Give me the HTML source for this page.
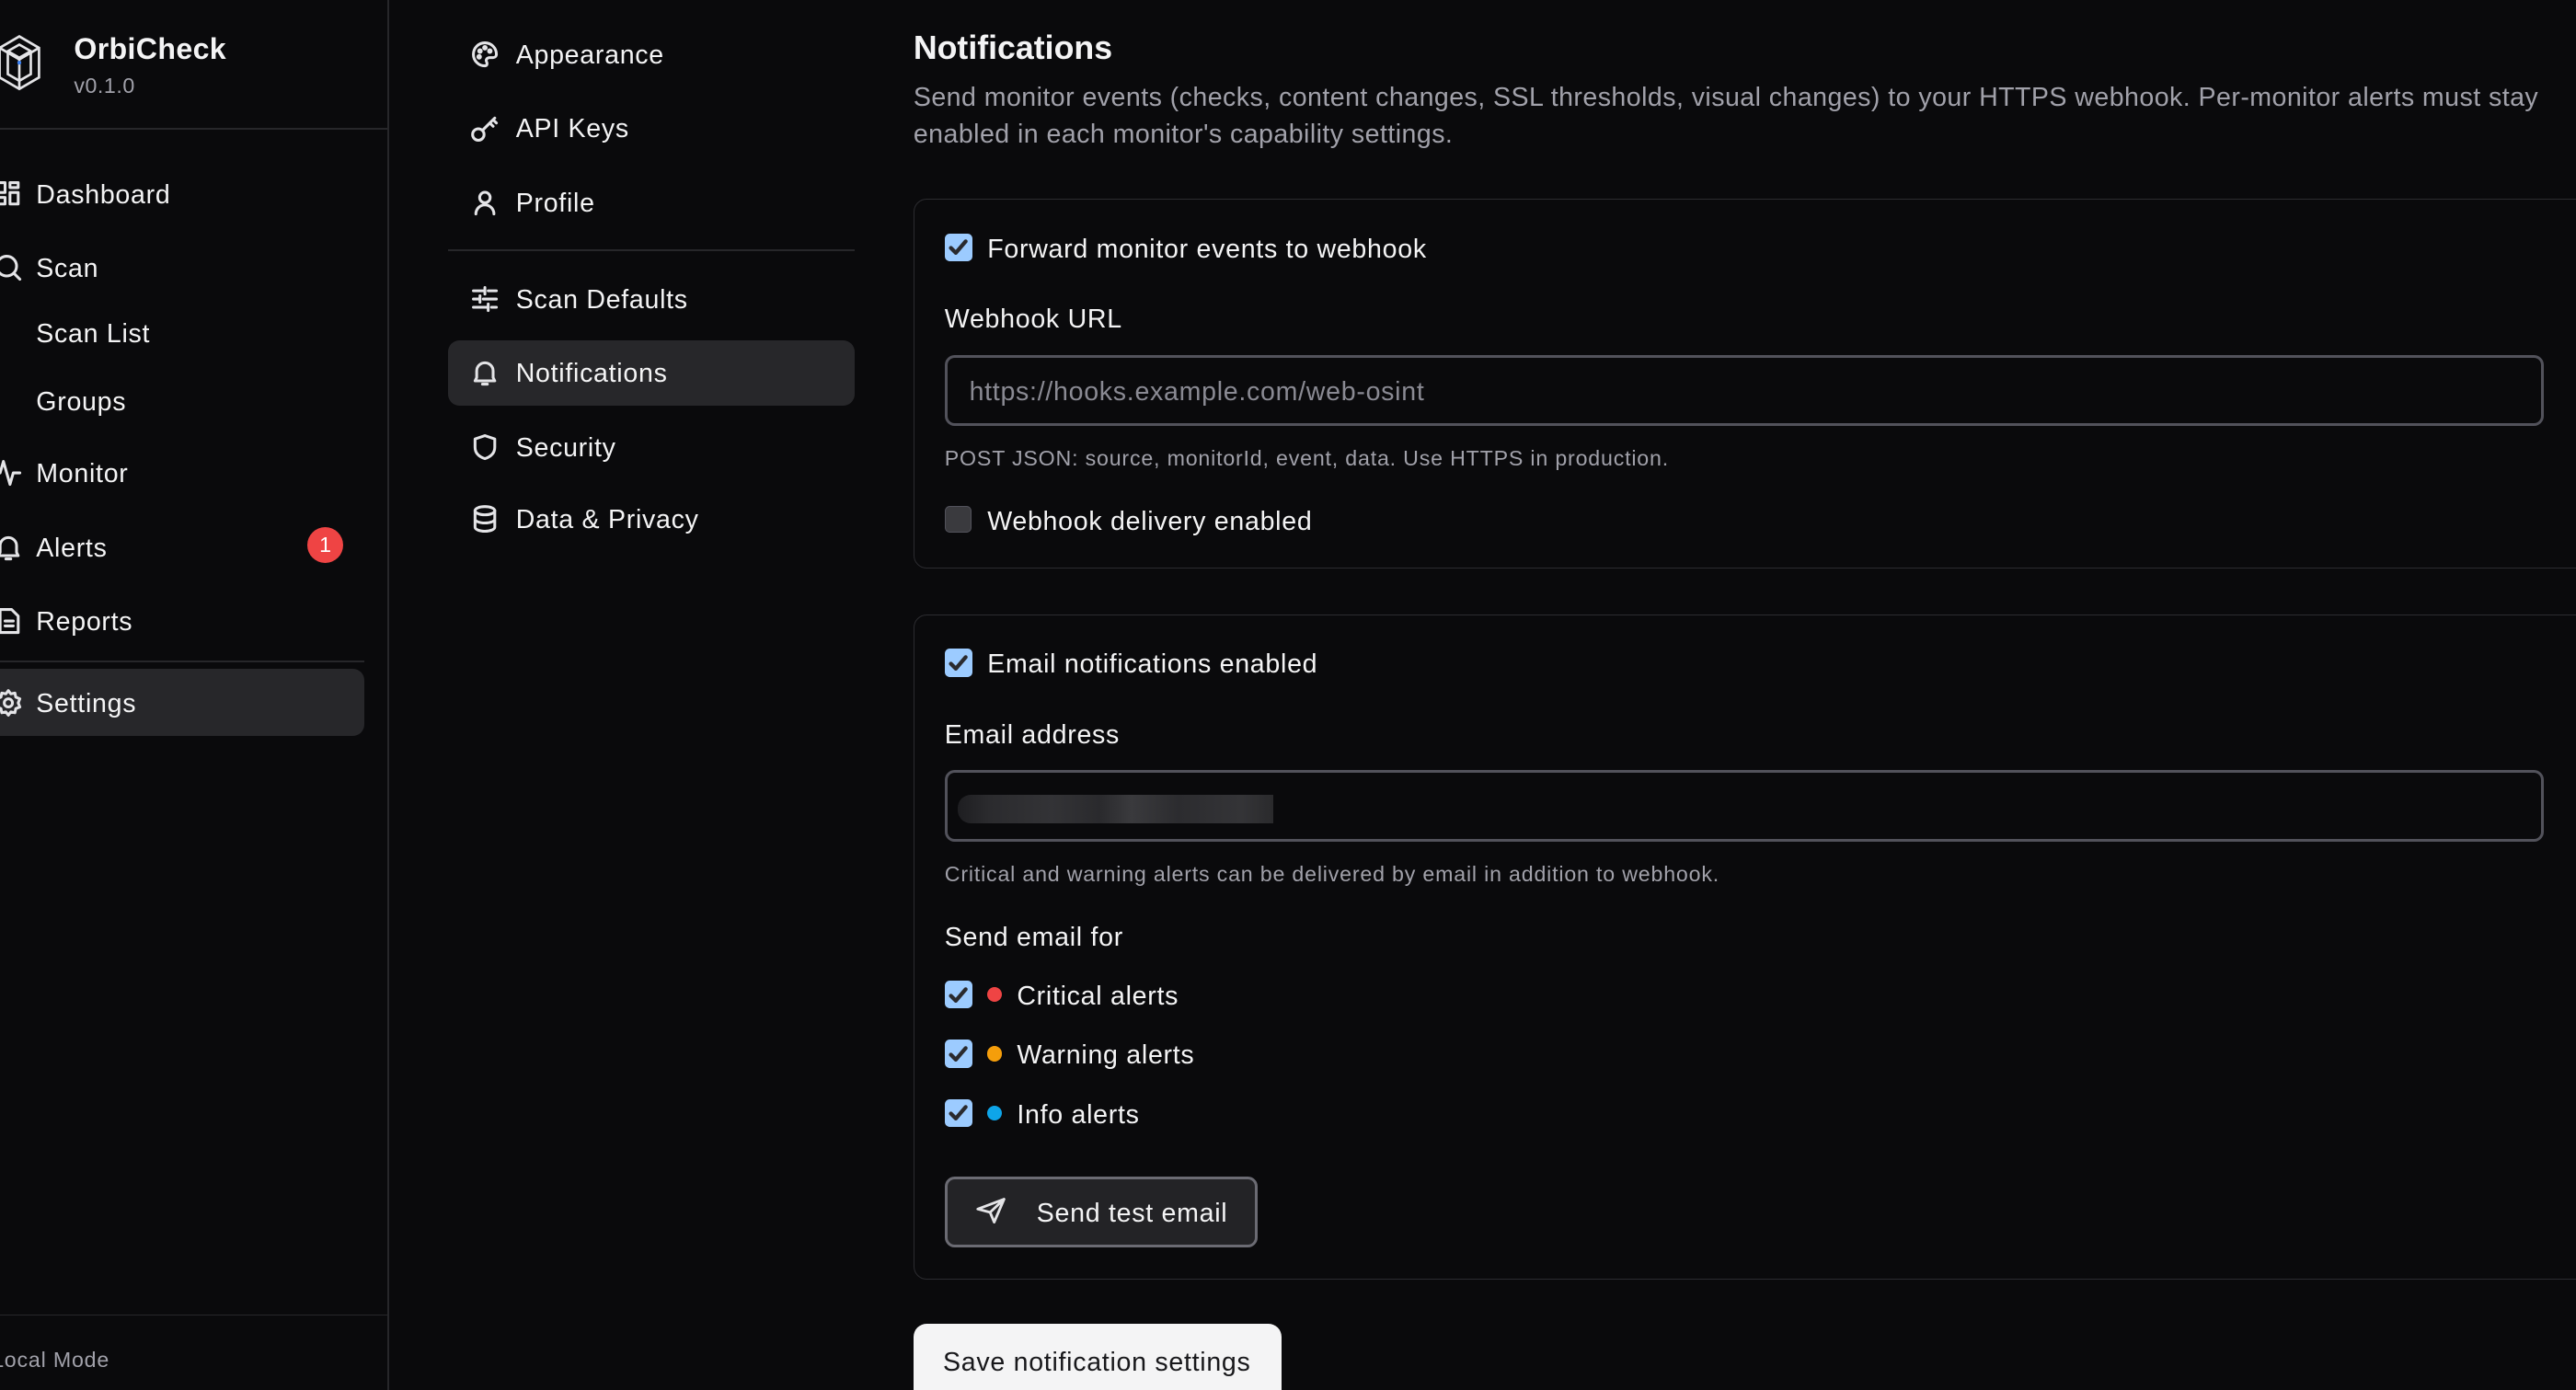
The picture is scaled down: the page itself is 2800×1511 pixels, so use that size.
<!DOCTYPE html>
<html><head><meta charset="utf-8">
<style>
html,body{margin:0;padding:0;background:#0a0a0c;overflow:hidden}
#w{position:relative;width:1568px;height:846px;zoom:1.785714;background:#0a0a0c;color:#f4f4f5;font-family:"Liberation Sans",sans-serif;overflow:hidden}
.a{position:absolute;white-space:nowrap}
.t16{font-size:16px;line-height:20px;letter-spacing:0.4px;margin-top:1px}
.sm{font-size:13px;line-height:16px;letter-spacing:0.45px}
.g{color:#a1a1aa}
svg.i{position:absolute;width:18px;height:18px;fill:none;stroke:#e4e4e7;stroke-width:1.7;stroke-linecap:round;stroke-linejoin:round}
.cb{position:absolute;width:17px;height:17px;border-radius:3px;background:#9ccbff}
.cb svg{position:absolute;left:2px;top:2px;width:13px;height:13px;fill:none;stroke:#2a2a2e;stroke-width:2.4;stroke-linecap:round;stroke-linejoin:round}
.card{position:absolute;left:556px;width:1030px;border:1px solid #2c2c30;border-radius:8px}
.inp{position:absolute;left:575px;width:970px;height:40px;border:2px solid #52525b;border-radius:6px}
.dot{position:absolute;width:9px;height:9px;border-radius:50%}
</style></head><body><div id="w">
<div class="a" style="left:236px;top:0;width:1px;height:846px;background:#27272a"></div>
<div class="a" style="left:0;top:78px;width:236px;height:1px;background:#27272a"></div>
<svg class="a" style="left:-2px;top:20px;width:28px;height:36px" viewBox="0 0 28 36" fill="none" stroke="#e4e4e7" stroke-width="1.5"><path d="M14 2 L26 9 L26 27 L14 34 L2 27 L2 9 Z"/><path d="M14 7 L21 11 L21 25 L14 29 L7 25 L7 11 Z"/><path d="M2 9 L14 16 L26 9 M14 16 V34 M7 11 L14 15 L21 11"/><circle cx="14" cy="18" r="1.2" fill="#3b82f6" stroke="none"/></svg>
<div class="a" style="left:45px;top:18px;font-size:18px;font-weight:bold;line-height:24px;letter-spacing:0.2px">OrbiCheck</div>
<div class="a g" style="left:45px;top:44px;font-size:13px;line-height:16px;letter-spacing:0.3px">v0.1.0</div>

<svg class="i" style="left:-4px;top:109px" viewBox="0 0 18 18"><rect x="2" y="2" width="5" height="6"/><rect x="10" y="2" width="5" height="3"/><rect x="10" y="8" width="5" height="7"/><rect x="2" y="11" width="5" height="4"/></svg>
<div class="a t16" style="left:22px;top:108px">Dashboard</div>
<svg class="i" style="left:-4px;top:154px" viewBox="0 0 18 18"><circle cx="8" cy="8" r="6"/><path d="M12.5 12.5 L16 16"/></svg>
<div class="a t16" style="left:22px;top:153px">Scan</div>
<div class="a t16" style="left:22px;top:193px">Scan List</div>
<div class="a t16" style="left:22px;top:234px">Groups</div>
<svg class="i" style="left:-4px;top:279px" viewBox="0 0 18 18"><path d="M1 9 H4 L6 2 L10 16 L12 9 H16"/></svg>
<div class="a t16" style="left:22px;top:278px">Monitor</div>
<svg class="i" style="left:-4px;top:324px" viewBox="0 0 18 18"><path d="M4 12 V8 a5 5 0 0 1 10 0 V12 L15 14 H3 Z M7.5 16 h3"/></svg>
<div class="a t16" style="left:22px;top:323px">Alerts</div>
<div class="a" style="left:187px;top:321px;width:22px;height:22px;border-radius:50%;background:#ef4444;color:#fff;font-size:13px;line-height:22px;text-align:center">1</div>
<svg class="i" style="left:-4px;top:369px" viewBox="0 0 18 18"><path d="M4 2 H11 L15 6 V16 H4 Z M7 9 H12 M7 12 H12"/></svg>
<div class="a t16" style="left:22px;top:368px">Reports</div>
<div class="a" style="left:0;top:402px;width:222px;height:1px;background:#27272a"></div>
<div class="a" style="left:-10px;top:407px;width:232px;height:41px;border-radius:7px;background:#27272a"></div>
<svg class="i" style="left:-4px;top:419px" viewBox="0 0 18 18"><circle cx="9" cy="9" r="2.5"/><path d="M9 1.5 L10.5 3.5 L13 3 L13.5 5.5 L16 6.5 L15 9 L16 11.5 L13.5 12.5 L13 15 L10.5 14.5 L9 16.5 L7.5 14.5 L5 15 L4.5 12.5 L2 11.5 L3 9 L2 6.5 L4.5 5.5 L5 3 L7.5 3.5 Z"/></svg>
<div class="a t16" style="left:22px;top:418px">Settings</div>
<div class="a" style="left:0;top:800px;width:236px;height:1px;background:#27272a"></div>
<div class="a g sm" style="left:-5px;top:820px">Local Mode</div>

<svg class="i" style="left:286px;top:24px" viewBox="0 0 18 18"><path d="M9 2 a7 7 0 1 0 0 14 c1.5 0 1.5-1.5 1-2.5 s0-2.5 2-2.5 h2 a2 2 0 0 0 2-2 A7 7 0 0 0 9 2 Z"/><circle cx="6" cy="7" r=".8"/><circle cx="9" cy="5" r=".8"/><circle cx="12" cy="7" r=".8"/><circle cx="5.5" cy="10.5" r=".8"/></svg>
<div class="a t16" style="left:314px;top:23px">Appearance</div>
<svg class="i" style="left:286px;top:69px" viewBox="0 0 18 18"><circle cx="5" cy="13" r="3.5"/><path d="M7.5 10.5 L15 3 M12 6 L14 8 M14 4 L16 6"/></svg>
<div class="a t16" style="left:314px;top:68px">API Keys</div>
<svg class="i" style="left:286px;top:114px" viewBox="0 0 18 18"><circle cx="9" cy="6" r="3.2"/><path d="M3.5 16 a5.5 5.5 0 0 1 11 0"/></svg>
<div class="a t16" style="left:314px;top:113px">Profile</div>
<div class="a" style="left:273px;top:152px;width:247px;height:1px;background:#27272a"></div>
<svg class="i" style="left:286px;top:173px" viewBox="0 0 18 18"><path d="M2 4 H8 M11 4 H16 M2 9 H5 M8 9 H16 M2 14 H10 M13 14 H16 M9 2 V6 M6 7 V11 M11 12 V16"/></svg>
<div class="a t16" style="left:314px;top:172px">Scan Defaults</div>
<div class="a" style="left:273px;top:207px;width:247px;height:40px;border-radius:7px;background:#27272a"></div>
<svg class="i" style="left:286px;top:218px" viewBox="0 0 18 18"><path d="M4 12 V8 a5 5 0 0 1 10 0 V12 L15 14 H3 Z M7.5 16 h3"/></svg>
<div class="a t16" style="left:314px;top:217px">Notifications</div>
<svg class="i" style="left:286px;top:263px" viewBox="0 0 18 18"><path d="M9 2 L15 4 V9 c0 4-3 6-6 7 c-3-1-6-3-6-7 V4 Z"/></svg>
<div class="a t16" style="left:314px;top:262px">Security</div>
<svg class="i" style="left:286px;top:307px" viewBox="0 0 18 18"><ellipse cx="9" cy="4" rx="6" ry="2.5"/><path d="M3 4 V14 c0 1.4 2.7 2.5 6 2.5 s6-1.1 6-2.5 V4 M3 9 c0 1.4 2.7 2.5 6 2.5 s6-1.1 6-2.5"/></svg>
<div class="a t16" style="left:314px;top:306px">Data &amp; Privacy</div>

<div class="a" style="left:556px;top:16px;font-size:20px;font-weight:bold;line-height:26px">Notifications</div>
<div class="a g" style="left:556px;top:49px;font-size:16px;line-height:22px;letter-spacing:0.25px">Send monitor events (checks, content changes, SSL thresholds, visual changes) to your HTTPS webhook. Per-monitor alerts must stay<br>enabled in each monitor's capability settings.</div>

<div class="card" style="top:121px;height:224px"></div>
<div class="cb" style="left:575px;top:142px"><svg viewBox="0 0 13 13"><path d="M2 7 L5 10 L11 3"/></svg></div>
<div class="a t16" style="left:601px;top:141px">Forward monitor events to webhook</div>
<div class="a t16" style="left:575px;top:184px">Webhook URL</div>
<div class="inp" style="top:216px"></div>
<div class="a t16" style="left:590px;top:228px;color:#8a8a93">https://hooks.example.com/web-osint</div>
<div class="a g sm" style="left:575px;top:271px">POST JSON: source, monitorId, event, data. Use HTTPS in production.</div>
<div class="a" style="left:575px;top:308px;width:15px;height:15px;border:1px solid #52525b;border-radius:3px;background:#3a3a3e"></div>
<div class="a t16" style="left:601px;top:307px">Webhook delivery enabled</div>

<div class="card" style="top:374px;height:404px"></div>
<div class="cb" style="left:575px;top:395px"><svg viewBox="0 0 13 13"><path d="M2 7 L5 10 L11 3"/></svg></div>
<div class="a t16" style="left:601px;top:394px">Email notifications enabled</div>
<div class="a t16" style="left:575px;top:437px">Email address</div>
<div class="inp" style="top:469px"></div>
<div class="a" style="left:583px;top:484px;width:192px;height:17px;border-radius:8px 0 0 8px;background:linear-gradient(90deg,#1e1e21 0,#2b2b2e 10%,#333336 30%,#2a2a2d 45%,#3a3a3d 55%,#2c2c2f 70%,#343437 90%,#2a2a2c 100%)"></div>
<div class="a g sm" style="left:575px;top:524px">Critical and warning alerts can be delivered by email in addition to webhook.</div>
<div class="a t16" style="left:575px;top:560px">Send email for</div>
<div class="cb" style="left:575px;top:597px"><svg viewBox="0 0 13 13"><path d="M2 7 L5 10 L11 3"/></svg></div>
<div class="dot" style="left:601px;top:601px;background:#ef4444"></div>
<div class="a t16" style="left:619px;top:596px">Critical alerts</div>
<div class="cb" style="left:575px;top:633px"><svg viewBox="0 0 13 13"><path d="M2 7 L5 10 L11 3"/></svg></div>
<div class="dot" style="left:601px;top:637px;background:#f59e0b"></div>
<div class="a t16" style="left:619px;top:632px">Warning alerts</div>
<div class="cb" style="left:575px;top:669px"><svg viewBox="0 0 13 13"><path d="M2 7 L5 10 L11 3"/></svg></div>
<div class="dot" style="left:601px;top:673px;background:#0ea5e9"></div>
<div class="a t16" style="left:619px;top:668px">Info alerts</div>
<div class="a" style="left:575px;top:716px;width:187px;height:40px;border:2px solid #6b6b73;border-radius:6px;background:#232326"></div>
<svg class="i" style="left:594px;top:728px;stroke-width:1.6" viewBox="0 0 18 18"><path d="M1 8 L17 2 L11 16 L8.5 10 Z M8.5 10 L17 2"/></svg>
<div class="a t16" style="left:631px;top:728px">Send test email</div>

<div class="a" style="left:556px;top:806px;width:224px;height:60px;border-radius:8px;background:#f4f4f5"></div>
<div class="a t16" style="left:574px;top:819px;color:#18181b">Save notification settings</div>
</div></body></html>
